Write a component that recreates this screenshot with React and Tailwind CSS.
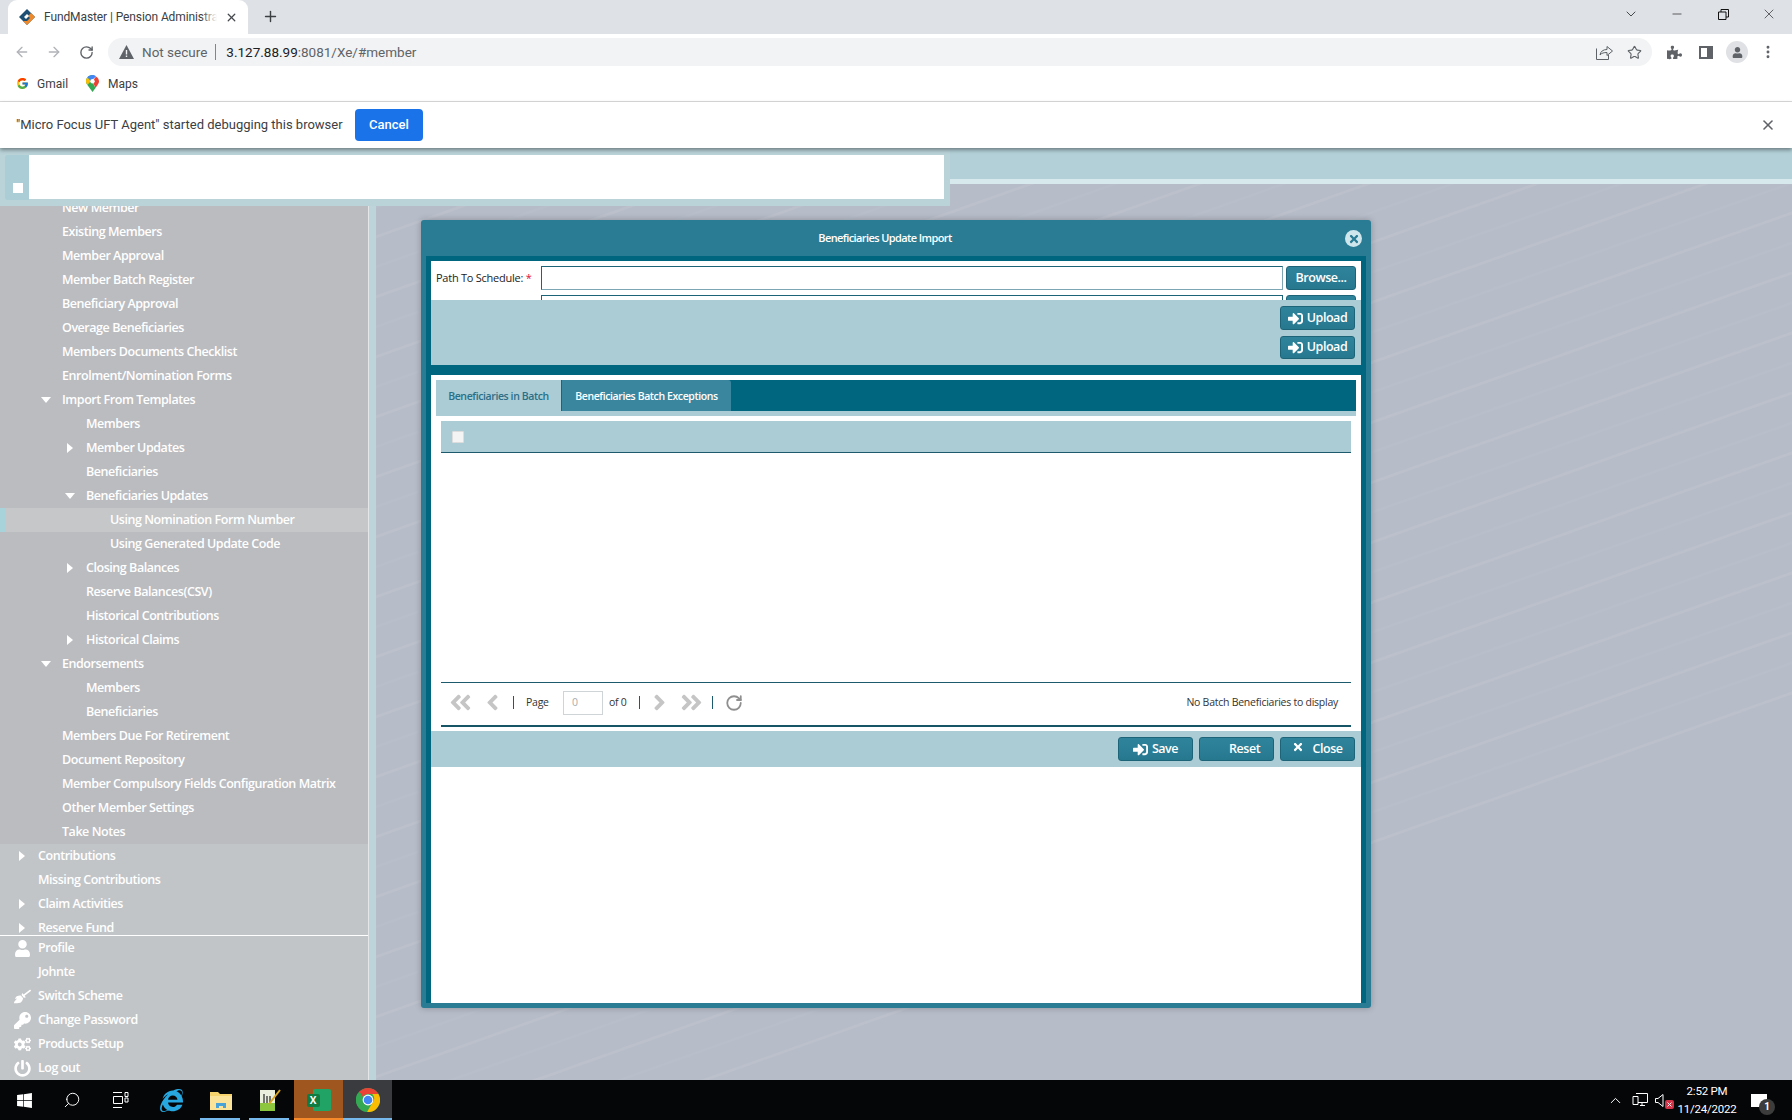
import React from "react";
import { FaSignInAlt, FaUser, FaBroom, FaKey, FaCogs, FaPowerOff, FaTimes, FaAngleDoubleLeft, FaAngleDoubleRight, FaAngleLeft, FaAngleRight, FaWindows, FaInternetExplorer, FaPuzzlePiece } from "react-icons/fa";
import { FcGoogle } from "react-icons/fc";
import { ArrowLeft, ArrowRight, RotateCw, X, Plus, ChevronDown, Minus, Star, Search, EllipsisVertical, RotateCw as Refresh, ChevronUp } from "lucide-react";

const MENU = [
  ["New Member", 1], ["Existing Members", 1], ["Member Approval", 1], ["Member Batch Register", 1],
  ["Beneficiary Approval", 1], ["Overage Beneficiaries", 1], ["Members Documents Checklist", 1],
  ["Enrolment/Nomination Forms", 1], ["Import From Templates", 1, "down"], ["Members", 2],
  ["Member Updates", 2, "right"], ["Beneficiaries", 2], ["Beneficiaries Updates", 2, "down"],
  ["Using Nomination Form Number", 3, null, true], ["Using Generated Update Code", 3],
  ["Closing Balances", 2, "right"], ["Reserve Balances(CSV)", 2], ["Historical Contributions", 2],
  ["Historical Claims", 2, "right"], ["Endorsements", 1, "down"], ["Members", 2], ["Beneficiaries", 2],
  ["Members Due For Retirement", 1], ["Document Repository", 1],
  ["Member Compulsory Fields Configuration Matrix", 1], ["Other Member Settings", 1], ["Take Notes", 1],
  ["Contributions", 0, "right"], ["Missing Contributions", 0], ["Claim Activities", 0, "right"], ["Reserve Fund", 0, "right"],
];
const LEVEL_PAD = ["pl-[16px]", "pl-[40px]", "pl-[64px]", "pl-[88px]"];

function Arrow({ dir }) {
  if (dir === "down") return <svg width="10" height="6" viewBox="0 0 10 6"><path d="M0 0h10L5 6z" fill="#fff" /></svg>;
  if (dir === "right") return <svg width="6" height="10" viewBox="0 0 6 10"><path d="M0 0l6 5-6 5z" fill="#fff" /></svg>;
  return null;
}

function MenuRow({ label, level, arrow, active }) {
  const bg = active ? "bg-[#c5c7c9]" : level === 0 ? "bg-[#c2c5c8]" : "bg-[#babcc0]";
  return (
    <div className={`relative flex items-center h-6 shrink-0 ${bg} ${LEVEL_PAD[level]}`}>
      {active && <span className="absolute left-0 top-0 h-6 w-[6px] bg-[#a9d3db]" />}
      <span className="w-3 mr-[10px] flex justify-center"><Arrow dir={arrow} /></span>
      <span className="text-[12.5px] font-semibold text-white tracking-[-0.45px] whitespace-nowrap">{label}</span>
    </div>
  );
}

function BottomRow({ icon, label }) {
  return (
    <div className="flex items-center h-6 pl-[12px]">
      <span className="w-5 mr-[6px] flex justify-center text-white text-[17px]">{icon}</span>
      <span className="text-[12.5px] font-semibold text-white tracking-[-0.45px]">{label}</span>
    </div>
  );
}

function Btn({ children, className = "", h = "h-6" }) {
  return (
    <div className={`flex items-center ${h} rounded-[3px] border border-[#1d6479] bg-[linear-gradient(#2f849b,#26788f)] text-white text-[12.5px] font-semibold tracking-[-0.45px] ${className}`}>
      {children}
    </div>
  );
}

function IconBtn({ label, h }) {
  return (
    <Btn h={h} className="w-[75px] justify-center gap-[4px]">
      <FaSignInAlt className="text-[15px]" />
      <span>{label}</span>
    </Btn>
  );
}

function Logo() {
  return (
    <svg width="16" height="16" viewBox="0 0 16 16">
      <path d="M8 0l8 8-8 8-8-8z" fill="#1c4f73" />
      <path d="M8 16l8-8-4-4-3 3 2 2-3 3-4-0z" fill="#ee8a2b" />
      <path d="M5 8l3-3 2 2-3 3z" fill="#fff" />
    </svg>
  );
}

function MapsPin() {
  return (
    <svg width="13" height="17" viewBox="0 0 13 17">
      <path d="M6.5 0C3 0 0 2.8 0 6.3c0 1.4.6 2.6 1.4 3.7L6.5 17l3-4-3-6z" fill="#34a853" />
      <path d="M1.4 2.2A6 6 0 0 0 0 6.3c0 1.4.6 2.6 1.4 3.7l3.6-4z" fill="#fbbc04" />
      <path d="M6.5 0C4.5 0 2.6 1 1.4 2.2L5 6l5-4.6C9 .5 7.8 0 6.5 0z" fill="#4285f4" />
      <path d="M10 1.4L6.5 6.3 9.5 13l2-3c.9-1.2 1.5-2.3 1.5-3.7 0-2-1.2-3.8-3-4.9z" fill="#ea4335" />
      <circle cx="6.5" cy="6.3" r="2.2" fill="#fff" />
    </svg>
  );
}

function ChromeIcon() {
  return (
    <svg width="24" height="24" viewBox="0 0 24 24">
      <circle cx="12" cy="12" r="12" fill="#34a853" />
      <path d="M12 0a12 12 0 0 1 10.4 6H12a6 6 0 0 0-5.2 3L3.2 3.8A12 12 0 0 1 12 0z" fill="#ea4335" />
      <path d="M22.4 6A12 12 0 0 1 11 24l5.2-9a6 6 0 0 0 0-9z" fill="#fbbc04" />
      <path d="M3.2 3.8L6.8 9a6 6 0 0 0 5.2 9l-1 6A12 12 0 0 1 3.2 3.8z" fill="#34a853" />
      <circle cx="12" cy="12" r="5.4" fill="#fff" />
      <circle cx="12" cy="12" r="4.3" fill="#4285f4" />
    </svg>
  );
}

function Stripes() {
  const lines = Array.from({ length: 34 }, (_, i) => i);
  return (
    <svg className="absolute inset-0 w-full h-full" viewBox="0 0 1415 896" preserveAspectRatio="none">
      {lines.map((i) => {
        const y = 30 + i * 30;
        return (
          <path key={i} d={`M-20 ${y} C 300 ${y - 110}, 800 ${y - 290}, 1440 ${y - 520}`} fill="none" stroke="#fff" strokeOpacity={i % 2 ? 0.07 : 0.04} strokeWidth="3" />
        );
      })}
    </svg>
  );
}

function Tab() {
  return (
    <div className="ml-[8px] w-[240px] h-[34px] bg-white rounded-t-[9px] flex items-center pl-[11px] relative">
      <Logo />
      <span className="relative ml-[9px] text-[12px] tracking-[-0.1px] text-[#3c4043] w-[173px] overflow-hidden whitespace-nowrap font-['Roboto',sans-serif]">
        FundMaster | Pension Administra
        <span className="absolute right-0 top-0 h-full w-4 bg-[linear-gradient(to_right,transparent,#fff)]" />
      </span>
      <X size={13} strokeWidth={2.4} className="ml-[8px] text-[#45494d]" />
    </div>
  );
}

function TaskCell({ children, className = "" }) {
  return <div className={`relative w-[49px] h-10 flex items-center justify-center shrink-0 ${className}`}>{children}</div>;
}
function Under({ color, inset }) {
  return <span className={`absolute bottom-0 h-[2px] ${inset} ${color}`} />;
}

export default function App() {
  return (
    <div className="w-[1792px] h-[1120px] overflow-hidden flex flex-col bg-white font-['Open_Sans',sans-serif]">
      {/* Browser tab strip */}
      <div className="h-[34px] bg-[#dee1e6] flex items-start shrink-0">
        <Tab />
        <Plus size={17} strokeWidth={2} className="ml-[14px] mt-[8px] text-[#3c4043]" />
        <div className="ml-auto flex items-center h-7 text-[#222]">
          <span className="w-[46px] flex justify-center"><ChevronDown size={16} strokeWidth={1.2} /></span>
          <span className="w-[46px] flex justify-center"><Minus size={14} strokeWidth={1.2} /></span>
          <span className="w-[46px] flex justify-center">
            <svg width="11" height="11" viewBox="0 0 11 11" fill="none" stroke="#111"><path d="M.5 3h7.5v7.5H.5zM3 3V.5h7.5V8H8" /></svg>
          </span>
          <span className="w-[46px] flex justify-center"><X size={16} strokeWidth={1} /></span>
        </div>
      </div>
      {/* Toolbar */}
      <div className="h-[32px] bg-white flex items-center shrink-0 pt-[4px]">
        <ArrowLeft size={16} strokeWidth={2} className="ml-[14px] text-[#b0b3b7]" />
        <ArrowRight size={16} strokeWidth={2} className="ml-[16px] text-[#b0b3b7]" />
        <RotateCw size={15} strokeWidth={2.2} className="ml-[17px] text-[#5f6368]" />
        <div className="ml-[14px] w-[1544px] h-7 rounded-full bg-[#f1f3f4] flex items-center text-[13.5px] font-['Roboto',sans-serif]">
          <svg className="ml-[11px]" width="15" height="14" viewBox="0 0 15 14"><path d="M7.5 0L15 14H0z" fill="#5f6368" /><rect x="6.8" y="5" width="1.4" height="4.5" fill="#f1f3f4" /><rect x="6.8" y="10.5" width="1.4" height="1.5" fill="#f1f3f4" /></svg>
          <span className="ml-[8px] text-[#5f6368]">Not secure</span>
          <span className="ml-[8px] w-px h-4 bg-[#80868b]" />
          <span className="ml-[10px] text-[#202124]">3.127.88.99<span className="text-[#5f6368]">:8081/Xe/#member</span></span>
          <svg className="ml-auto" width="17" height="15" viewBox="0 0 17 15" fill="none" stroke="#5f6368" strokeWidth="1"><path d="M.5 3.5v11h12V10M4 10c.5-3.500 3-5.500 7-5.500V1.500l5.500 4.500L11 10.500V7.500c-3 0-5.500.5-7 2.500z" /></svg>
          <Star size={15} strokeWidth={1.8} className="ml-[14px] mr-[10px] text-[#5f6368]" />
        </div>
        <FaPuzzlePiece className="ml-[15px] text-[15px] text-[#5f6368]" />
        <span className="ml-[17px] w-[14px] h-[13px] border-[2px] border-[#5f6368] border-r-[6px] block" />
        <span className="ml-[13px] w-[22px] h-[22px] rounded-full bg-[#dfe1e5] flex items-center justify-center"><FaUser className="text-[11px] text-[#5f6368]" /></span>
        <EllipsisVertical size={16} strokeWidth={2.4} className="ml-[12px] text-[#5f6368]" />
      </div>
      {/* Bookmarks */}
      <div className="h-[36px] bg-white flex items-center shrink-0 border-b border-[#dcdcdc] text-[12px] text-[#3c4043] font-['Roboto',sans-serif]">
        <FcGoogle className="ml-[16px] text-[13px]" />
        <span className="ml-[8px]">Gmail</span>
        <span className="ml-[18px] flex"><MapsPin /></span>
        <span className="ml-[9px]">Maps</span>
      </div>
      {/* Debug infobar */}
      <div className="relative z-20 h-[46px] bg-white flex items-center shrink-0 shadow-[0_2px_4px_rgba(0,0,0,0.4)] font-['Roboto',sans-serif]">
        <span className="ml-[16px] w-[339px] text-[13px] text-[#3c4043] whitespace-nowrap">"Micro Focus UFT Agent" started debugging this browser</span>
        <span className="w-[68px] h-8 rounded-[4px] bg-[#1a73e8] text-white text-[13px] font-medium flex items-center justify-center">Cancel</span>
        <X size={16} strokeWidth={2.4} className="ml-auto mr-[16px] text-[#5f6368]" />
      </div>

      {/* Application */}
      <div className="relative flex-1 flex flex-col min-h-0">
        {/* Header bar */}
        <div className="h-[36px] shrink-0 bg-[#b3d0d8] border-b-[5px] border-[#d7e9ed]" />
        {/* Left header block overlay */}
        <div className="absolute z-10 left-0 top-0 w-[950px] h-[58px] bg-[#b9d3d9] pl-[5px] pt-[7px] flex">
          <div className="w-[24px] h-[45px] bg-[#abcdd5] rounded-l-[3px] flex items-end pl-[8px] pb-[7px]">
            <span className="w-[10px] h-[10px] bg-white block" />
          </div>
          <div className="w-[915px] h-[44px] bg-white" />
        </div>

        <div className="flex-1 flex min-h-0">
          {/* Sidebar */}
          <aside className="w-[369px] shrink-0 flex flex-col bg-[#c2c5c8] border-r border-[#e4e6e8]">
            <div className="h-[752px] shrink-0 overflow-hidden border-b border-white flex flex-col">
              <div className="h-[12px] shrink-0 bg-[#babcc0]" />
              {MENU.map(([label, level, arrow, active], i) => (
                <MenuRow key={i} label={label} level={level} arrow={arrow} active={active} />
              ))}
            </div>
            <BottomRow icon={<FaUser />} label="Profile" />
            <BottomRow label="Johnte" />
            <BottomRow icon={<FaBroom />} label="Switch Scheme" />
            <BottomRow icon={<FaKey />} label="Change Password" />
            <BottomRow icon={<FaCogs />} label="Products Setup" />
            <BottomRow icon={<FaPowerOff />} label="Log out" />
          </aside>
          <div className="w-[7px] shrink-0 bg-[#bcd4da]" />
          {/* Main canvas */}
          <main className="relative flex-1 bg-[#b6bcc8] overflow-hidden">
            <Stripes />
          </main>
        </div>

        {/* Modal */}
        <div className="absolute z-10 left-[421px] top-[72px] w-[950px] h-[788px] rounded-[3px] bg-[#297c94] shadow-[0_0_6px_rgba(0,0,0,0.25)] flex flex-col">
          <div className="relative h-9 shrink-0 flex items-center justify-center pr-[22px] pt-[1px]">
            <span className="text-[11px] font-semibold text-white tracking-[-0.6px]">Beneficiaries Update Import</span>
            <span className="absolute right-[9px] top-[10px] w-[17px] h-[17px] rounded-full bg-[#cfe6ec] flex items-center justify-center">
              <FaTimes className="text-[12px] text-[#297c94]" />
            </span>
          </div>
          <div className="flex-1 mx-[5px] mb-[5px] px-[5px] bg-[#00667f] pt-[5px] flex flex-col min-h-0">
            {/* Upper pane */}
            <div className="h-[39px] shrink-0 bg-white overflow-hidden pt-[5px] pl-[5px] pr-[5px] flex flex-col gap-[5px]">
              <div className="flex items-center h-6 shrink-0">
                <span className="w-[105px] text-[11px] text-[#222] tracking-[-0.25px]">Path To Schedule: <span className="text-[#e0103a]">*</span></span>
                <span className="w-[742px] h-6 border border-[#1d6479] border-b-[#7ca6b3] border-r-[#7ca6b3] bg-white" />
                <Btn className="ml-[3px] w-[70px] justify-center">Browse...</Btn>
              </div>
              <div className="flex items-center h-6 shrink-0">
                <span className="w-[105px]" />
                <span className="w-[742px] h-6 border border-[#1d6479] bg-white" />
                <Btn className="ml-[3px] w-[70px] justify-center" />
              </div>
            </div>
            <div className="h-[65px] shrink-0 bg-[#abccd5] flex flex-col items-end gap-[6px] pr-[6px] pt-[6px]">
              <IconBtn label="Upload" />
              <IconBtn label="Upload" h="h-[23px]" />
            </div>
            <div className="h-[10px] shrink-0" />
            {/* Lower pane */}
            <div className="flex-1 bg-white flex flex-col min-h-0">
              <div className="mx-[5px] mt-[5px] h-[36px] shrink-0 bg-[#abccd5]">
                <div className="h-[31px] bg-[#00667f] flex text-[10.5px] tracking-[-0.4px] font-semibold">
                  <div className="w-[126px] bg-[#abccd5] text-[#2a6f88] flex items-center justify-center border-r border-[#1d6479] pt-[2px]">Beneficiaries in Batch</div>
                  <div className="w-[169px] bg-[#3b869f] text-white rounded-tr-[3px] flex items-center justify-center pt-[2px]">Beneficiaries Batch Exceptions</div>
                </div>
              </div>
              <div className="mx-[10px] mt-[5px] h-[32px] shrink-0 bg-[#abccd5] border-b border-[#1d5a6e] flex items-center pl-[11px]">
                <span className="w-3 h-3 bg-[#f4f4f4] rounded-[1px] border border-[#dddddd] block" />
              </div>
              <div className="h-[229px] shrink-0" />
              {/* Pager */}
              <div className="mx-[10px] h-[45px] shrink-0 border-t border-[#1d5a6e] border-b-2 border-b-[#155566] flex items-center text-[10.5px] tracking-[-0.25px] text-[#333] pb-[3px]">
                <span className="ml-[3px] w-8 flex justify-center"><FaAngleDoubleLeft className="text-[#c5c5c5] text-[25px]" /></span>
                <span className="w-8 flex justify-center"><FaAngleLeft className="text-[#c5c5c5] text-[25px]" /></span>
                <span className="ml-[5px] w-px h-[13px] bg-[#1d5a6e]" />
                <span className="ml-[12px] w-[37px]">Page</span>
                <span className="w-[40px] h-6 border border-[#cfd4d6] text-[#aaa] pl-[8px] flex items-center">0</span>
                <span className="ml-[6px] w-[30px]">of 0</span>
                <span className="w-px h-[13px] bg-[#1d5a6e]" />
                <span className="ml-[3px] w-8 flex justify-center"><FaAngleRight className="text-[#c5c5c5] text-[25px]" /></span>
                <span className="w-8 flex justify-center"><FaAngleDoubleRight className="text-[#c5c5c5] text-[25px]" /></span>
                <span className="ml-[5px] w-px h-[13px] bg-[#1d5a6e]" />
                <Refresh size={18} strokeWidth={2.4} className="ml-[12px] text-[#8f8f8f]" />
                <span className="ml-auto mr-[13px]">No Batch Beneficiaries to display</span>
              </div>
              <div className="mt-[4px] h-9 shrink-0 bg-[#abccd5] flex items-center justify-end gap-[6px] pr-[6px]">
                <IconBtn label="Save" />
                <Btn className="w-[75px] pl-[29px]">Reset</Btn>
                <Btn className="w-[75px] justify-center gap-[8px]">
                  <FaTimes className="text-[12px] self-start mt-[3px]" />
                  <span>Close</span>
                </Btn>
              </div>
            </div>
          </div>
        </div>
      </div>

      {/* Windows taskbar */}
      <div className="relative z-20 h-10 shrink-0 bg-[#050608] flex items-center text-white">
        <TaskCell><FaWindows className="text-[17px]" /></TaskCell>
        <TaskCell><Search size={18} strokeWidth={1.3} className="-scale-x-100 mr-[3px]" /></TaskCell>
        <TaskCell>
          <svg className="mr-[4px]" width="17" height="16" viewBox="0 0 17 16" fill="none" stroke="#fff"><path d="M1 .5h9M1 15.500h9M1.500 4.500h9v7h-9zM13 .5h3v4h-3zM13 6h3v4h-3z" /></svg>
        </TaskCell>
        <TaskCell><FaInternetExplorer className="text-[23px] text-[#27a8e0]" /></TaskCell>
        <TaskCell>
          <svg width="22" height="19" viewBox="0 0 22 19"><path d="M0 1h8l2 2h12v16H0z" fill="#f6d36d" /><rect y="5" width="22" height="14" fill="#fbe39a" /><path d="M6 17v-5h10v5h-3v-2H9v2z" fill="#4aa3d8" /></svg>
          <Under color="bg-[#76b9ed]" inset="left-[4px] right-[5px]" />
        </TaskCell>
        <TaskCell>
          <svg width="22" height="23" viewBox="0 0 22 23"><path d="M1 1h15v21H1z" fill="#e9efdc" /><path d="M1 14h15v8H1z" fill="#8cc63f" /><path d="M5 5v9M8 7v7M11 7v7" stroke="#333" strokeWidth="1.300" /><path d="M10 15L21 1" stroke="#d9a520" strokeWidth="2" /></svg>
          <Under color="bg-[#76b9ed]" inset="left-[4px] right-[5px]" />
        </TaskCell>
        <TaskCell className="bg-[#a0561f]">
          <span className="relative w-[24px] h-[22px] flex">
            <span className="absolute right-0 top-0 w-[18px] h-[22px] bg-[#21a366] rounded-[2px]" />
            <span className="absolute left-0 top-[5px] w-[13px] h-[13px] bg-[#107c41] rounded-[2px] text-white text-[10px] font-bold flex items-center justify-center">X</span>
          </span>
          <Under color="bg-[#f7892b]" inset="left-0 right-0" />
        </TaskCell>
        <TaskCell className="bg-[#3a3b3f]">
          <ChromeIcon />
          <Under color="bg-[#76b9ed]" inset="left-0 right-0" />
        </TaskCell>
        <div className="ml-auto flex items-center h-10 font-['Roboto',sans-serif]">
          <ChevronUp size={17} strokeWidth={1.4} />
          <svg className="ml-[8px]" width="16" height="14" viewBox="0 0 16 14" fill="none" stroke="#fff"><path d="M4 .5h11.500v9H6M1 3.500h5v8H1zM8 12.500h5M10 9.500v3" /></svg>
          <span className="relative ml-[7px] w-[18px] h-4 flex items-center">
            <svg width="10" height="13" viewBox="0 0 10 13" fill="none" stroke="#fff"><path d="M.5 4.500h2.500l5-4v12l-5-4H.5z" /></svg>
            <span className="absolute right-[-1px] bottom-[-1px] w-[9px] h-[9px] rounded-[2px] bg-[#d03448] flex items-center justify-center"><X size={7} strokeWidth={3} /></span>
          </span>
          <div className="ml-[4px] w-[60px] flex flex-col items-center text-[11.5px] tracking-[-0.2px] leading-[18px]">
            <span>2:52 PM</span>
            <span>11/24/2022</span>
          </div>
          <span className="relative ml-[14px] mr-[25px] w-[16px] h-[13px] bg-white block">
            <span className="absolute right-[-8px] bottom-[-8px] w-[16px] h-[16px] rounded-full bg-[#3c3c3c] text-white text-[10px] font-bold flex items-center justify-center">1</span>
          </span>
        </div>
      </div>
    </div>
  );
}
